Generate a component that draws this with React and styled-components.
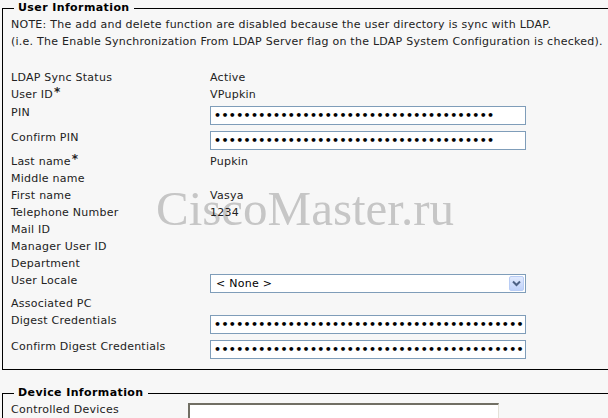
import React from "react";
import styled, { createGlobalStyle } from "styled-components";

const GlobalStyle = createGlobalStyle`
  html, body {
    margin: 0;
    padding: 0;
    background: #f7f7f7;
    overflow: hidden;
  }
  body {
    font-family: "DejaVu Sans", Verdana, sans-serif;
    font-size: 11px;
    letter-spacing: 0.25px;
    color: #222;
  }
`;

const Page = styled.div`
  position: relative;
  width: 608px;
  height: 418px;
  overflow: hidden;
`;

const Watermark = styled.div`
  position: absolute;
  left: 156px;
  top: 185px;
  font-family: "Liberation Serif", "Times New Roman", serif;
  font-size: 49px;
  line-height: 48px;
  letter-spacing: 0;
  color: #c6c6c6;
  white-space: nowrap;
  pointer-events: none;
  z-index: 0;
`;

const Content = styled.div`
  position: relative;
  z-index: 1;
  padding-top: 1px;
`;

const Fieldset = styled.fieldset`
  width: 660px;
  margin: ${(p) => (p.$first ? "0" : "16px")} 0 0 2px;
  padding: ${(p) => (p.$first ? "1px 8px 7px 8px" : "1px 8px 0 8px")};
  border: 1px solid #000;
  box-sizing: border-box;
  min-width: 0;
`;

const Legend = styled.legend`
  font-weight: bold;
  font-size: 11px;
  letter-spacing: 0.4px;
  line-height: 14px;
  padding: 0 4px;
  margin-left: 3px;
  color: #000;
`;

const Note = styled.div`
  line-height: 17px;
  white-space: nowrap;
  margin-bottom: 19px;
`;

const Form = styled.div`
  display: grid;
  grid-template-columns: ${(p) => p.$labelWidth}px 1fr;
  align-items: start;
`;

const Label = styled.div`
  line-height: 17px;
  padding-top: ${(p) => p.$pad || 0}px;
  white-space: nowrap;
`;

const Required = styled.span`
  font-size: 12px;
  font-weight: bold;
  line-height: 0;
  vertical-align: 2px;
  margin-left: 1px;
`;

const Value = styled.div`
  line-height: 17px;
  min-height: 17px;
  padding: ${(p) => p.$pad || "0"};
  white-space: nowrap;
`;

const PasswordInput = styled.input`
  display: block;
  box-sizing: border-box;
  width: 316px;
  height: 19px;
  margin: 0;
  padding: 0 2px 0 3px;
  border: 1px solid #7f9db9;
  background: #fff;
  color: #000;
  font-family: "DejaVu Sans", Verdana, sans-serif;
  font-size: 11px;
  font-weight: bold;
  letter-spacing: 0.35px;
  outline: none;
`;

const SelectBox = styled.div`
  display: flex;
  align-items: center;
  box-sizing: border-box;
  width: 316px;
  height: 19px;
  border: 1px solid #7f9db9;
  background: #fff;
  padding: 0 1px 0 5px;
`;

const SelectText = styled.span`
  flex: 1;
  color: #000;
  line-height: 17px;
`;

const ArrowButton = styled.span`
  display: flex;
  align-items: center;
  justify-content: center;
  width: 15px;
  height: 15px;
  box-sizing: border-box;
  border: 1px solid #b9cdf5;
  border-radius: 2px;
  background: linear-gradient(#e1eafe, #c0d2fa);
`;

const ListBox = styled.div`
  box-sizing: border-box;
  width: 311px;
  height: 40px;
  margin-top: 2px;
  background: #fff;
  border-top: 2px solid #716f64;
  border-left: 2px solid #716f64;
  border-right: 1px solid #e4e2d8;
`;

const Chevron = () => (
  <svg width="9" height="7" viewBox="0 0 9 7">
    <path d="M1 1.5 L4.5 5 L8 1.5" fill="none" stroke="#4d6185" strokeWidth="2" />
  </svg>
);

const pin = "x".repeat(38);
const digest = "x".repeat(60);

export default function App() {
  return (
    <>
      <GlobalStyle />
      <Page>
        <Watermark>CiscoMaster.ru</Watermark>
        <Content>
          <Fieldset $first>
            <Legend>User Information</Legend>
            <Note>
              NOTE: The add and delete function are disabled because the user directory is sync with LDAP.
              <br />
              (i.e. The Enable Synchronization From LDAP Server flag on the LDAP System Configuration is checked).
            </Note>
            <Form $labelWidth={199}>
              <Label>LDAP Sync Status</Label>
              <Value>Active</Value>

              <Label>
                User ID<Required>*</Required>
              </Label>
              <Value>VPupkin</Value>

              <Label $pad={1}>PIN</Label>
              <Value $pad="3px 0">
                <PasswordInput type="password" value={pin} readOnly />
              </Value>

              <Label $pad={1}>Confirm PIN</Label>
              <Value $pad="3px 0">
                <PasswordInput type="password" value={pin} readOnly />
              </Value>

              <Label>
                Last name<Required>*</Required>
              </Label>
              <Value>Pupkin</Value>

              <Label>Middle name</Label>
              <Value />

              <Label>First name</Label>
              <Value>Vasya</Value>

              <Label>Telephone Number</Label>
              <Value>1234</Value>

              <Label>Mail ID</Label>
              <Value />

              <Label>Manager User ID</Label>
              <Value />

              <Label>Department</Label>
              <Value />

              <Label>User Locale</Label>
              <Value $pad="2px 0">
                <SelectBox>
                  <SelectText>&lt; None &gt;</SelectText>
                  <ArrowButton>
                    <Chevron />
                  </ArrowButton>
                </SelectBox>
              </Value>

              <Label>Associated PC</Label>
              <Value />

              <Label>Digest Credentials</Label>
              <Value $pad="3px 0">
                <PasswordInput type="password" value={digest} readOnly />
              </Value>

              <Label $pad={1}>Confirm Digest Credentials</Label>
              <Value $pad="3px 0">
                <PasswordInput type="password" value={digest} readOnly />
              </Value>
            </Form>
          </Fieldset>

          <Fieldset>
            <Legend>Device Information</Legend>
            <Form $labelWidth={177}>
              <Label>Controlled Devices</Label>
              <Value>
                <ListBox />
              </Value>
            </Form>
          </Fieldset>
        </Content>
      </Page>
    </>
  );
}
